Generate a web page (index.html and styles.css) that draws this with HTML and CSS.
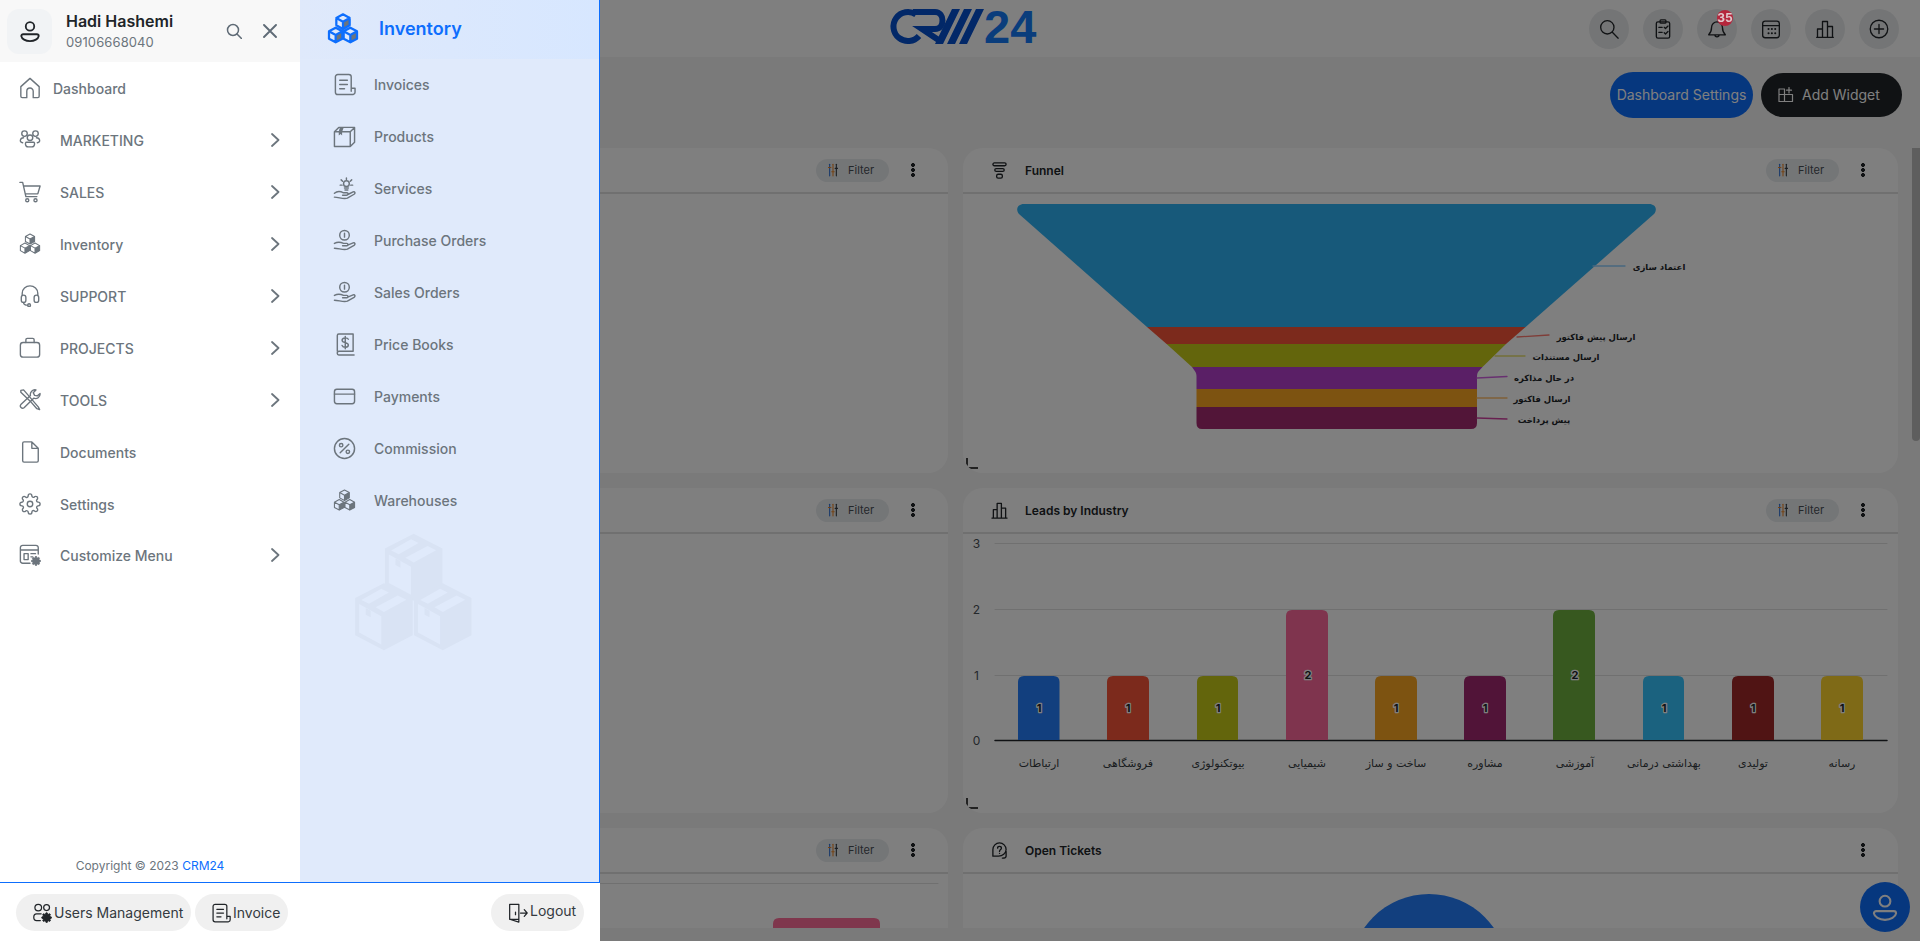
FILE: index.html
```html
<!DOCTYPE html>
<html lang="en">
<head>
<meta charset="utf-8">
<title>CRM24 Dashboard</title>
<link rel="stylesheet" href="styles.css">
</head>
<body>
<svg class="sprites" aria-hidden="true">
  <symbol id="i-cubes" viewBox="0 0 24 24">
    <path class="face" d="M12 6.5 17 3.75V9.25L12 12ZM6.5 16.5 11.5 13.75V19.25L6.5 22ZM17.5 16.5 22.5 13.75V19.25L17.5 22Z"/>
    <path d="M12 1 17 3.75V9.25L12 12 7 9.25V3.75ZM7 3.75 12 6.5 17 3.75M12 6.5V12M6.5 11 11.5 13.75V19.25L6.5 22 1.5 19.25V13.75ZM1.5 13.75 6.5 16.5 11.5 13.75M6.5 16.5V22M17.5 11 22.5 13.75V19.25L17.5 22 12.5 19.25V13.75ZM12.5 13.75 17.5 16.5 22.5 13.75M17.5 16.5V22"/>
  </symbol>
  <symbol id="i-gear" viewBox="0 0 24 24">
    <circle cx="12" cy="12" r="3"/>
    <path d="M19.4 15a1.65 1.65 0 0 0 .33 1.82l.06.06a2 2 0 0 1 0 2.83 2 2 0 0 1-2.83 0l-.06-.06a1.65 1.65 0 0 0-1.82-.33 1.65 1.65 0 0 0-1 1.51V21a2 2 0 0 1-2 2 2 2 0 0 1-2-2v-.09A1.65 1.65 0 0 0 9 19.4a1.65 1.65 0 0 0-1.82.33l-.06.06a2 2 0 0 1-2.83 0 2 2 0 0 1 0-2.83l.06-.06a1.65 1.65 0 0 0 .33-1.82 1.65 1.65 0 0 0-1.51-1H3a2 2 0 0 1-2-2 2 2 0 0 1 2-2h.09A1.65 1.65 0 0 0 4.6 9a1.65 1.65 0 0 0-.33-1.82l-.06-.06a2 2 0 0 1 0-2.83 2 2 0 0 1 2.83 0l.06.06a1.65 1.65 0 0 0 1.82.33H9a1.65 1.65 0 0 0 1-1.51V3a2 2 0 0 1 2-2 2 2 0 0 1 2 2v.09a1.65 1.65 0 0 0 1 1.51 1.65 1.65 0 0 0 1.82-.33l.06-.06a2 2 0 0 1 2.83 0 2 2 0 0 1 0 2.83l-.06.06a1.65 1.65 0 0 0-.33 1.82V9a1.65 1.65 0 0 0 1.51 1H21a2 2 0 0 1 2 2 2 2 0 0 1-2 2h-.09a1.65 1.65 0 0 0-1.51 1z"/>
  </symbol>
  <symbol id="i-person" viewBox="0 0 24 24">
    <circle cx="12" cy="7" r="4.6"/>
    <path d="M4.5 15.5H19.5A2 2 0 0 1 21.500 17.500C21 20.500 17 23 12 23S3 20.500 2.500 17.500A2 2 0 0 1 4.500 15.500Z"/>
  </symbol>
  <symbol id="i-chevron" viewBox="0 0 10 14"><path d="M2 1 8.500 7 2 13"/></symbol>
  <symbol id="i-invoice" viewBox="0 0 24 24">
    <path d="M19 19V4A2.500 2.500 0 0 0 16.500 1.500H5A2.500 2.500 0 0 0 2.500 4V20A2.500 2.500 0 0 0 5 22.500H21A2.500 2.500 0 0 0 23 20V16H19"/>
    <path d="M7 7.500H15M7 12H15M7 16.500H12"/>
  </symbol>
  <symbol id="i-filter" viewBox="0 0 12 16">
    <path class="s-blue" d="M2 1V15"/><path class="s-orange" d="M6 1V15"/><path class="s-dark" d="M10 1V15"/>
    <path class="s-orange" d="M.5 5H3.500M4.500 10H7.500"/><path class="s-dark" d="M8.500 6H11.500"/>
  </symbol>
  <symbol id="i-hand-coin" viewBox="0 0 24 24">
    <circle cx="12" cy="6.500" r="5"/>
    <path d="M12 4.500V8.500M1.500 15C5 13 8 13.500 11 15H14.500C16 15 16 17.500 14.500 17.500H10M16 16.500 21 14.500C23 14 23.500 16 22 17L15 21C11 22.500 6 20 1.500 20"/>
  </symbol>
  <symbol id="i-crate" viewBox="-100 -100 200 215">
    <path class="crate-fill" d="M0-95 87-50V62L0 108-87 62V-50Z"/>
    <path class="crate-light" d="M-75-32-8 5V90L-75 54ZM-68-44-8-78 15-67-45-33ZM-25-22 42-58 68-45 0-8Z"/>
    <path class="crate-fill" d="M-55-20-40-12V8L-55 0Z"/>
  </symbol>
</svg>

<div class="page">
  <header class="topbar">
    <span></span>
    <svg class="logo" viewBox="0 0 147 35" role="img" aria-label="CRM24">
      <path class="logo-c" d="M26 5.500A14.500 14.500 0 1 0 29 27"/>
      <path class="logo-c" d="M23 3H45C55 3 55 20 45 20H32L50 32"/>
      <path class="logo-s" d="M62 0H70L53 35H45ZM74 0H82L65 35H57ZM86 0H94L77 35H69Z"/>
      <text class="logo-t" x="94" y="34">24</text>
    </svg>
    <nav class="top-actions">
      <button class="round"><svg viewBox="0 0 24 24"><circle cx="10" cy="10" r="8"/><path d="M16 16 23 23"/></svg></button>
      <button class="round"><svg viewBox="0 0 24 24"><rect x="4" y="3.500" width="16" height="19.500" rx="2"/><rect x="8.500" y="1" width="7" height="4" rx="1"/><path d="M7 10H11M7 16H11M13.500 10 15 11.500 18 8.500M13.500 16.500 15 18 18 15"/></svg></button>
      <button class="round bell"><svg viewBox="0 0 24 24"><path d="M2 19C5 16 5.500 14 5.500 10A6.500 6.500 0 0 1 18.500 10C18.500 14 19 16 22 19ZM9.500 19A2.500 2.500 0 0 0 14.500 19"/></svg><span class="badge">35</span></button>
      <button class="round"><svg viewBox="0 0 24 24"><rect x="2" y="2.500" width="20" height="20" rx="3"/><path d="M2 8H22"/><path class="dotted" d="M9 12H9.100M13 12H13.100M17 12H17.100M9 17H9.100M13 17H13.100M17 17H17.100"/></svg></button>
      <button class="round"><svg viewBox="0 0 24 24"><path d="M2 22H22M3 22V12H9V22M9 22V3H15V22M15 9H21V22"/></svg></button>
      <button class="round"><svg viewBox="0 0 24 24"><circle cx="12" cy="12" r="10.500"/><path d="M12 6.500V17.500M6.500 12H17.500"/></svg></button>
    </nav>
  </header>

  <div class="toolbar">
    <button class="btn-primary">Dashboard Settings</button>
    <button class="btn-dark"><svg viewBox="0 0 16 16"><path d="M1 2H6.500V7.500H1ZM1 7.500H6.500V14.500H1ZM6.500 7.500H14.500V14.500H6.500ZM11 .5V6M8.500 3.200H13.500"/></svg>Add Widget</button>
  </div>

  <main class="board">
    <div class="grid">
      <section class="card">
        <header class="card-head">
          <div class="card-tools"><button class="filter"><svg><use href="#i-filter"/></svg>Filter</button><span class="kebab"></span></div>
        </header>
      </section>

      <section class="card">
        <header class="card-head">
          <svg class="head-icon" viewBox="0 0 16 18"><rect x="1" y="1" width="14" height="3" rx="1.500"/><rect x="3" y="7" width="10" height="3" rx="1.500"/><rect x="5" y="13" width="6" height="4" rx="1.500"/></svg>
          <h3>Funnel</h3>
          <div class="card-tools"><button class="filter"><svg><use href="#i-filter"/></svg>Filter</button><span class="kebab"></span></div>
        </header>
        <svg class="chart" viewBox="963 194 935 279">
          <path fill="#2eb2f4" d="M1024 204H1649C1655 204 1658 209 1654 214L1525.600 327H1147L1019 214C1015 209 1018 204 1024 204Z"/>
          <path fill="#f85438" d="M1147 327H1525.600L1506 344H1166.600Z"/>
          <path fill="#c6ca18" d="M1166.600 344H1506L1482.500 367H1192Z"/>
          <path fill="#b43ecc" d="M1192 367H1482.500L1478 372Q1477 374 1477 376V389H1196.500V376Q1196.500 374 1195.500 372Z"/>
          <path fill="#faa622" d="M1196.500 389H1477V407H1196.500Z"/>
          <path fill="#a42a70" d="M1196.500 407H1477V423Q1477 429 1471 429H1202Q1196.500 429 1196.500 423Z"/>
          <path class="lead l1" d="M1593 266H1625"/>
          <path class="lead l2" d="M1517 337 1549 335"/>
          <path class="lead l3" d="M1495 356H1525"/>
          <path class="lead l4" d="M1477 378 1507 376.500"/>
          <path class="lead l5" d="M1477 398H1507"/>
          <path class="lead l6" d="M1477 418 1507 419"/>
          <text class="fa-b" x="1659" y="270" text-anchor="middle">اعتماد سازی</text>
          <text class="fa-b" x="1596" y="340" text-anchor="middle">ارسال پیش فاکتور</text>
          <text class="fa-b" x="1566" y="360" text-anchor="middle">ارسال مستندات</text>
          <text class="fa-b" x="1544" y="381" text-anchor="middle">در حال مذاکره</text>
          <text class="fa-b" x="1542" y="402" text-anchor="middle">ارسال فاکتور</text>
          <text class="fa-b" x="1544" y="423" text-anchor="middle">پیش پرداخت</text>
        </svg>
      </section>

      <section class="card">
        <header class="card-head">
          <div class="card-tools"><button class="filter"><svg><use href="#i-filter"/></svg>Filter</button><span class="kebab"></span></div>
        </header>
      </section>

      <section class="card">
        <header class="card-head">
          <svg class="head-icon" viewBox="0 0 18 18"><path d="M1 17H17M2.500 17V8H6.500V17M6.500 17V1.500H11V17M11 6.500H15.500V17"/></svg>
          <h3>Leads by Industry</h3>
          <div class="card-tools"><button class="filter"><svg><use href="#i-filter"/></svg>Filter</button><span class="kebab"></span></div>
        </header>
        <svg class="chart" viewBox="963 534 935 279">
          <path class="gridline" d="M995 543.500H1887M995 609.500H1887M995 675.500H1887"/>
          <path class="axis" d="M995 740.500H1887"/>
          <text class="tick" x="976.500" y="548" text-anchor="middle">3</text>
          <text class="tick" x="976.500" y="614" text-anchor="middle">2</text>
          <text class="tick" x="976.500" y="680" text-anchor="middle">1</text>
          <text class="tick" x="976.500" y="745" text-anchor="middle">0</text>
          <path fill="#247efc" d="M1018 740V682Q1018 676 1024 676H1053.500Q1059.500 676 1059.500 682V740Z"/>
          <path fill="#f85438" d="M1107 740V682Q1107 676 1113 676H1143Q1149 676 1149 682V740Z"/>
          <path fill="#c6ca18" d="M1197 740V682Q1197 676 1203 676H1232Q1238 676 1238 682V740Z"/>
          <path fill="#ff689c" d="M1286 740V616Q1286 610 1292 610H1322Q1328 610 1328 616V740Z"/>
          <path fill="#faa622" d="M1375 740V682Q1375 676 1381 676H1411Q1417 676 1417 682V740Z"/>
          <path fill="#a22870" d="M1464 740V682Q1464 676 1470 676H1500Q1506 676 1506 682V740Z"/>
          <path fill="#6eb03e" d="M1553 740V616Q1553 610 1559 610H1589Q1595 610 1595 616V740Z"/>
          <path fill="#36c4ff" d="M1643 740V682Q1643 676 1649 676H1678Q1684 676 1684 682V740Z"/>
          <path fill="#a02828" d="M1732 740V682Q1732 676 1738 676H1768Q1774 676 1774 682V740Z"/>
          <path fill="#ffd42e" d="M1821 740V682Q1821 676 1827 676H1857Q1863 676 1863 682V740Z"/>
          <text class="bar-v" x="1039" y="712">1</text>
          <text class="bar-v" x="1128" y="712">1</text>
          <text class="bar-v" x="1218" y="712">1</text>
          <text class="bar-v" x="1308" y="679">2</text>
          <text class="bar-v" x="1396" y="712">1</text>
          <text class="bar-v" x="1485" y="712">1</text>
          <text class="bar-v" x="1575" y="679">2</text>
          <text class="bar-v" x="1664" y="712">1</text>
          <text class="bar-v" x="1753" y="712">1</text>
          <text class="bar-v" x="1842" y="712">1</text>
          <text class="fa" x="1039" y="767" text-anchor="middle">ارتباطات</text>
          <text class="fa" x="1128" y="767" text-anchor="middle">فروشگاهی</text>
          <text class="fa" x="1218" y="767" text-anchor="middle">بیوتکنولوژی</text>
          <text class="fa" x="1307" y="767" text-anchor="middle">شیمیایی</text>
          <text class="fa" x="1396" y="767" text-anchor="middle">ساخت و ساز</text>
          <text class="fa" x="1485" y="767" text-anchor="middle">مشاوره</text>
          <text class="fa" x="1575" y="767" text-anchor="middle">آموزشی</text>
          <text class="fa" x="1664" y="767" text-anchor="middle">بهداشتی درمانی</text>
          <text class="fa" x="1753" y="767" text-anchor="middle">تولیدی</text>
          <text class="fa" x="1842" y="767" text-anchor="middle">رسانه</text>
        </svg>
      </section>

      <section class="card">
        <header class="card-head">
          <div class="card-tools"><button class="filter"><svg><use href="#i-filter"/></svg>Filter</button><span class="kebab"></span></div>
        </header>
        <svg class="chart" viewBox="13 874 935 279">
          <path class="gridline" d="M600 883.500H938"/>
          <path fill="#ff6e9a" d="M773 1000V924Q773 918 779 918H874Q880 918 880 924V1000Z"/>
        </svg>
      </section>

      <section class="card">
        <header class="card-head">
          <svg class="head-icon" viewBox="0 0 18 18"><path d="M9 1A7 7 0 0 0 2 8V15H8C12 15 16 12 16 8A7 7 0 0 0 9 1ZM16 10V15C16 17 14 17 12 17"/><path d="M7 6.500C7 4 11 4 11 6.500C11 8 9 8 9 10M9 12H9.100"/></svg>
          <h3>Open Tickets</h3>
          <div class="card-tools"><span class="kebab"></span></div>
        </header>
        <svg class="chart" viewBox="963 874 935 279">
          <circle fill="#247efc" cx="1429" cy="973" r="79"/>
        </svg>
      </section>
    </div>
    <div class="scroll-thumb"></div>
  </main>
  <div class="page-foot"></div>
  <button class="fab"><svg><use href="#i-person"/></svg></button>
</div>

<div class="overlay"></div>

<aside class="drawer">
  <div class="drawer-main">
    <div class="col-left">
      <div class="user">
        <div class="avatar"><svg><use href="#i-person"/></svg></div>
        <div class="user-text"><strong>Hadi Hashemi</strong><span>09106668040</span></div>
        <div class="user-tools">
          <svg class="t-search" viewBox="0 0 16 16"><circle cx="7" cy="7" r="5.500"/><path d="M11 11 15.500 15.500"/></svg>
          <svg class="t-close" viewBox="0 0 14 14"><path d="M1 1 13 13M13 1 1 13"/></svg>
        </div>
      </div>
      <ul class="menu">
        <li class="menu-item dash"><svg class="ico" viewBox="0 0 24 24"><path d="M2 10.500 12 1.500 22 10.500V21A1.500 1.500 0 0 1 20.500 22.500H15.500V15.500A3.500 3.500 0 0 0 8.500 15.500V22.500H3.500A1.500 1.500 0 0 1 2 21Z"/></svg>Dashboard</li>
        <li class="menu-item"><svg class="ico" viewBox="0 0 24 24"><circle cx="6" cy="5" r="3"/><circle cx="18" cy="5" r="3"/><circle cx="12" cy="9.500" r="3"/><path d="M5 9.500C1 9.500 0 14.500 4 15M19 9.500C23 9.500 24 14.500 20 15M8 14.500H16C17.500 14.500 17.500 19.500 14 19.500H10C6.500 19.500 6.500 14.500 8 14.500Z"/></svg>MARKETING<svg class="chev"><use href="#i-chevron"/></svg></li>
        <li class="menu-item"><svg class="ico" viewBox="0 0 24 24"><path d="M1 1.500H4L7.500 17H19.500M5 5.500H23L20.500 14H7"/><circle cx="9" cy="21" r="1.700"/><circle cx="18" cy="21" r="1.700"/></svg>SALES<svg class="chev"><use href="#i-chevron"/></svg></li>
        <li class="menu-item"><svg class="ico ico-cubes"><use href="#i-cubes"/></svg>Inventory<svg class="chev"><use href="#i-chevron"/></svg></li>
        <li class="menu-item"><svg class="ico" viewBox="0 0 24 24"><path d="M3.500 11V9A8.500 8 0 0 1 20.500 9V11"/><rect x="2.500" y="11" width="5" height="8" rx="2.500"/><rect x="16.500" y="11" width="5" height="8" rx="2.500"/><path d="M5 19C5 21 7 22 9.500 22"/><circle cx="11" cy="22" r="1.500"/></svg>SUPPORT<svg class="chev"><use href="#i-chevron"/></svg></li>
        <li class="menu-item"><svg class="ico" viewBox="0 0 24 24"><rect x="1.500" y="6" width="21" height="16" rx="3"/><path d="M7.500 6V3A1.500 1.500 0 0 1 9 1.500H15A1.500 1.500 0 0 1 16.500 3V6"/></svg>PROJECTS<svg class="chev"><use href="#i-chevron"/></svg></li>
        <li class="menu-item"><svg class="ico" viewBox="0 0 24 24"><path d="M2 1.500 5 1 21 19.500 22.500 22.500 19.500 21.500 12 13 2 3.500Z"/><path d="M23 5A5 5 0 0 1 16 10L5.500 20.500A2.500 2.500 0 0 1 2 17L12.500 7A5 5 0 0 1 18.500 1L15.500 4 17 7 20 7.500Z"/></svg>TOOLS<svg class="chev"><use href="#i-chevron"/></svg></li>
        <li class="menu-item"><svg class="ico" viewBox="0 0 24 24"><path d="M4 2.500A1.500 1.500 0 0 1 5.500 1H14L21 8V21.500A1.500 1.500 0 0 1 19.500 23H5.500A1.500 1.500 0 0 1 4 21.500ZM14 1V8H21"/></svg>Documents</li>
        <li class="menu-item"><svg class="ico"><use href="#i-gear"/></svg>Settings</li>
        <li class="menu-item last"><svg class="ico" viewBox="0 0 24 24"><path d="M21 11V4A2.500 2.500 0 0 0 18.500 1.500H4A2.500 2.500 0 0 0 1.500 4V18.500A2.500 2.500 0 0 0 4 21H12M1.500 6.500H21"/><path d="M5.500 10.500H10V17H5.500ZM13 10.500H18M13 14H15"/><g class="gear-grey"><use href="#i-gear" x="13" y="13" width="11" height="11"/></g></svg>Customize Menu<svg class="chev"><use href="#i-chevron"/></svg></li>
      </ul>
      <p class="copyright">Copyright © 2023 <a>CRM24</a></p>
    </div>
    <div class="col-right">
      <div class="sub-title"><svg class="ico-title"><use href="#i-cubes"/></svg>Inventory</div>
      <ul class="submenu">
        <li class="sub-item"><svg class="ico" viewBox="0 0 24 24"><use href="#i-invoice"/></svg>Invoices</li>
        <li class="sub-item"><svg class="ico" viewBox="0 0 24 24"><path d="M1.500 7 6 2.500H22.500V18L18 22.500H1.500ZM1.500 7H18V22.500M18 7 22.500 2.500"/><path class="solid" d="M7 3H11L9.500 7V11L8 9.500 6 11V7Z"/></svg>Products</li>
        <li class="sub-item"><svg class="ico" viewBox="0 0 24 24"><path d="M1.500 17C5 14 8 15 11 16.500H14.500C16.500 16.500 16 19 14 19H10M16 18 21 15.500C23 15 23.500 17 22 18L15 22C11 23.500 6 21 1.500 21"/><circle cx="14" cy="7" r="3"/><path d="M14 1V2.500M8.500 3 10 4.500M19.500 3 18 4.500M7.500 8.500H9.500M18.500 8.500H20.500M12 11.500H16M12.500 13.500H15.500"/></svg>Services</li>
        <li class="sub-item"><svg class="ico"><use href="#i-hand-coin"/></svg>Purchase Orders</li>
        <li class="sub-item"><svg class="ico"><use href="#i-hand-coin"/></svg>Sales Orders</li>
        <li class="sub-item"><svg class="ico" viewBox="0 0 24 24"><path d="M4.500 19V2.500A1.500 1.500 0 0 1 6 1H21V19H6A2 2 0 0 0 4.500 21.500C4.500 22.500 5 23 6 23H22"/><path d="M16 6.500C15 4.500 9.500 4.500 9.500 7.500C9.500 11 16 9 16 12.500C16 15.500 10.500 15.500 9.500 13M12.800 3.500V16.500"/></svg>Price Books</li>
        <li class="sub-item"><svg class="ico" viewBox="0 0 24 24"><rect x="1.500" y="4.500" width="21" height="15" rx="2.500"/><path d="M1.500 9.500H22.500"/></svg>Payments</li>
        <li class="sub-item"><svg class="ico" viewBox="0 0 24 24"><circle cx="12" cy="12" r="10.500"/><path d="M16.500 7.500 7.500 16.500"/><circle cx="8.500" cy="8.500" r="1.800"/><circle cx="15.500" cy="15.500" r="1.800"/></svg>Commission</li>
        <li class="sub-item"><svg class="ico ico-cubes"><use href="#i-cubes"/></svg>Warehouses</li>
      </ul>
      <svg class="crates" viewBox="160 695 356 360" aria-hidden="true">
        <use href="#i-crate" x="240" y="695" width="200" height="215"/>
        <use href="#i-crate" x="150" y="845" width="200" height="215"/>
        <use href="#i-crate" x="328" y="845" width="200" height="215"/>
      </svg>
    </div>
  </div>
  <footer class="drawer-foot">
    <div class="foot-group">
      <button class="pill pill-users"><svg viewBox="0 0 24 24"><circle cx="7.500" cy="5.500" r="4"/><circle cx="17.500" cy="5.500" r="3.500"/><path d="M11 13H5.500C1 13 1 21 5.500 21H10"/><g class="gear-dark"><use href="#i-gear" x="11" y="11" width="13" height="13"/></g></svg>Users Management</button>
      <button class="pill pill-invoice"><svg viewBox="0 0 24 24"><use href="#i-invoice"/></svg>Invoice</button>
    </div>
    <button class="pill pill-logout"><svg viewBox="0 0 24 24"><path d="M13 3V1.500H2V19.500L13 23V3M2 19.500H13M9 11V14M15 12H23M19.500 8 23 12 19.500 16"/></svg><span>Logout</span></button>
  </footer>
</aside>
</body>
</html>
```

FILE: styles.css
```css
* { box-sizing: border-box; }
html, body { margin: 0; height: 100%; overflow: hidden; }
body { font-family: Inter, "Liberation Sans", sans-serif; background: #f5f5f5; color: #212529; }
button { font: inherit; border: 0; background: none; padding: 0; color: inherit; }
ul { list-style: none; margin: 0; padding: 0; }
p, h3 { margin: 0; }
.sprites { width: 0; height: 0; display: block; position: absolute; }
svg { fill: none; stroke-linecap: round; stroke-linejoin: round; }

/* underlying page */
.page { height: 941px; display: flex; flex-direction: column; position: relative; }
.topbar { height: 57px; flex: none; background: #fff; display: grid; grid-template-columns: 1fr auto 1fr; align-items: center; padding-right: 21px; }
.logo { width: 147px; height: 35px; margin-left: 28px; margin-top: -5px; overflow: visible; }
.logo-c { stroke: #0450d0; stroke-width: 6; stroke-linecap: butt; stroke-linejoin: miter; }
.logo-s { fill: #0450d0; }
.logo-t { fill: #147af8; font: 700 47px "Liberation Sans", sans-serif; }
.top-actions { display: flex; gap: 14px; justify-self: end; }
.round { width: 40px; height: 40px; border-radius: 50%; background: #e9ebed; display: flex; align-items: center; justify-content: center; position: relative; }
.round svg { width: 20px; height: 20px; stroke: #212529; stroke-width: 1.600; }
.round svg .dotted { stroke-width: 2.400; }
.badge { position: absolute; left: 20px; top: 1px; width: 16px; height: 16px; border-radius: 50%; background: #b5263c; color: #e0c8cc; font-size: 12px; font-weight: 700; line-height: 16px; text-align: center; z-index: 20; }

.toolbar { height: 91px; flex: none; display: flex; justify-content: flex-end; align-items: center; gap: 8px; padding: 0 18px 16px 0; }
.btn-primary { height: 46px; width: 143px; border-radius: 23px; background: #0d6efd; color: #fff; font-size: 14px; }
.btn-dark { height: 44px; width: 141px; border-radius: 22px; background: #212529; color: #fff; font-size: 14px; font-weight: 400; display: flex; align-items: center; gap: 8px; padding-left: 17px; }
.btn-dark svg { width: 16px; height: 16px; stroke: #fff; stroke-width: 1.200; }

.board { flex: 1; min-height: 0; overflow: hidden; position: relative; }
.grid { display: grid; grid-template-columns: 935px 935px; grid-auto-rows: 325px; gap: 15px; padding-left: 13px; }
.card { background: #fff; border-radius: 20px; overflow: hidden; position: relative; display: flex; flex-direction: column; }
.card::after { content: ""; position: absolute; left: 3px; bottom: 4px; width: 10px; height: 9px; border-left: 2px solid #444; border-bottom: 2px solid #444; }
.card-head { height: 46px; flex: none; border-bottom: 2px solid #e0e0e0; display: flex; align-items: center; padding: 0 27px 0 28px; }
.card-head h3 { font-size: 12px; font-weight: 600; color: #212529; margin-left: 17px; }
.head-icon { width: 17px; height: 17px; stroke: #212529; stroke-width: 1.400; }
.card-tools { margin-left: auto; display: flex; align-items: center; gap: 16px; }
.filter { width: 73px; height: 23px; border-radius: 12px; background: #e9ecef; display: flex; align-items: center; gap: 10px; padding-left: 12px; font-size: 11px; color: #495057; }
.filter svg { width: 10px; height: 14px; stroke-width: 1.300; }
.s-blue { stroke: #2a6fd8; } .s-orange { stroke: #e8862a; } .s-dark { stroke: #343a40; }
.kebab { width: 16px; height: 14px; position: relative; background: radial-gradient(circle at 8px 2px, #212529 1.700px, transparent 2.200px), radial-gradient(circle at 8px 7px, #212529 1.700px, transparent 2.200px), radial-gradient(circle at 8px 12px, #212529 1.700px, transparent 2.200px); }
.chart { flex: 1; min-height: 0; width: 935px; height: 279px; display: block; }
.lead { stroke-width: 1.300; }
.l1 { stroke: #8fd0ff; } .l2 { stroke: #ff7a70; } .l3 { stroke: #e8e070; } .l4 { stroke: #d060e0; } .l5 { stroke: #ffc070; } .l6 { stroke: #d040a0; }
.fa-b { font: 700 8.500px "DejaVu Sans", sans-serif; fill: #212529; direction: rtl; }
.fa { font: 400 11px "DejaVu Sans", sans-serif; fill: #343a40; direction: rtl; }
.tick { font: 400 12px Inter, sans-serif; fill: #495057; }
.gridline { stroke: #e0e0e0; stroke-width: 1; }
.axis { stroke: #212529; stroke-width: 1.500; }
.bar-v { font: 700 11px Inter, sans-serif; fill: #212529; stroke: #fff; stroke-width: 2.500px; paint-order: stroke; text-anchor: middle; }
.scroll-thumb { position: absolute; right: 0; top: -15px; width: 8px; height: 308px; border-radius: 4px; background: #bcbcbc; }
.page-foot { height: 13px; flex: none; background: #f5f5f5; }
.fab { position: absolute; left: 1860px; top: 882px; width: 50px; height: 50px; border-radius: 50%; background: #0d6efd; display: flex; align-items: center; justify-content: center; }
.fab svg { width: 28px; height: 28px; stroke: #fff; stroke-width: 1.800; }

.overlay { position: fixed; inset: 0; background: rgba(0, 0, 0, .5); z-index: 10; }

/* drawer */
.drawer { position: fixed; left: 0; top: 0; width: 600px; height: 941px; z-index: 30; display: flex; flex-direction: column; background: #fff; }
.drawer-main { height: 883px; flex: none; display: flex; border-bottom: 1px solid #0d6efd; border-right: 1px solid #0d6efd; }
.col-left { width: 300px; flex: none; display: flex; flex-direction: column; }
.user { height: 62px; flex: none; background: #f8f8f8; display: flex; align-items: center; padding: 0 23px 0 7px; gap: 14px; }
.avatar { width: 45px; height: 45px; border-radius: 12px; background: #f1f3f5; display: flex; align-items: center; justify-content: center; }
.avatar svg { width: 22px; height: 24px; stroke: #212529; stroke-width: 2; }
.user-text { display: flex; flex-direction: column; gap: 3px; padding-bottom: 2px; }
.user-text strong { font-size: 16px; font-weight: 600; color: #212529; line-height: 20px; }
.user-text span { font-size: 13px; color: #6c757d; line-height: 16px; letter-spacing: .1px; }
.user-tools { margin-left: auto; display: flex; align-items: center; gap: 21px; }
.t-search { width: 16px; height: 16px; stroke: #5f6b76; stroke-width: 1.500; }
.t-close { width: 14px; height: 14px; stroke: #5f6b76; stroke-width: 1.900; }
.menu-item { height: 52px; display: flex; align-items: center; padding: 0 20px 0 19px; gap: 19px; font-size: 14px; font-weight: 500; color: #6c757d; }
.menu-item.dash { gap: 12px; }
.menu-item.last { height: 50px; }
.ico { width: 22px; height: 22px; flex: none; stroke: #6c757d; stroke-width: 1.500; }
.ico-cubes { stroke-width: 1.150; }
.face, .solid { fill: #6c757d; stroke: none; }
.gear-grey { fill: #6c757d; stroke: #6c757d; stroke-width: 2; }
.gear-dark { fill: #212529; stroke: #212529; stroke-width: 2; }
.chev { width: 10px; height: 14px; margin-left: auto; stroke: #6c757d; stroke-width: 1.800; }
.copyright { margin-top: auto; padding-bottom: 8px; text-align: center; font-size: 12px; color: #6c757d; line-height: 16px; }
.copyright a { color: #0d6efd; }
.col-right { flex: 1; background: #e0eafb; display: flex; flex-direction: column; }
.sub-title { height: 59px; flex: none; background: linear-gradient(90deg, #dfe9fb, #d7e7ff); display: flex; align-items: center; padding: 0 0 2px 27px; gap: 20px; font-size: 18px; font-weight: 600; color: #0d6efd; }
.ico-title { width: 32px; height: 32px; stroke: #0d6efd; stroke-width: 1.700; }
.ico-title .face { fill: #0d6efd; }
.submenu { margin-top: -1px; }
.sub-item { height: 52px; display: flex; align-items: center; padding-left: 33px; gap: 18px; font-size: 14px; font-weight: 500; color: #6c757d; }
.sub-item .ico { width: 23px; height: 23px; }
.crates { width: 118px; height: 119px; margin: 6px 0 0 54px; flex: none; }
.crate-fill { fill: #d9e3f4; }
.crate-light { fill: #e0eafb; }
.drawer-foot { flex: 1; display: flex; justify-content: space-between; align-items: flex-start; padding: 11px 16px 0; background: #fff; }
.foot-group { display: flex; gap: 4px; }
.pill { height: 37px; border-radius: 19px; background: #f0f0f0; display: flex; align-items: center; font-size: 14px; color: #343a40; }
.pill svg { width: 20px; height: 20px; stroke: #212529; stroke-width: 1.500; flex: none; }
.pill-users { width: 175px; padding-left: 16px; gap: 2px; }
.pill-invoice { width: 93px; padding-left: 16px; gap: 2px; }
.pill-logout { width: 93px; padding-left: 17px; gap: 2px; }
.pill-logout span { padding-bottom: 4px; }
```
